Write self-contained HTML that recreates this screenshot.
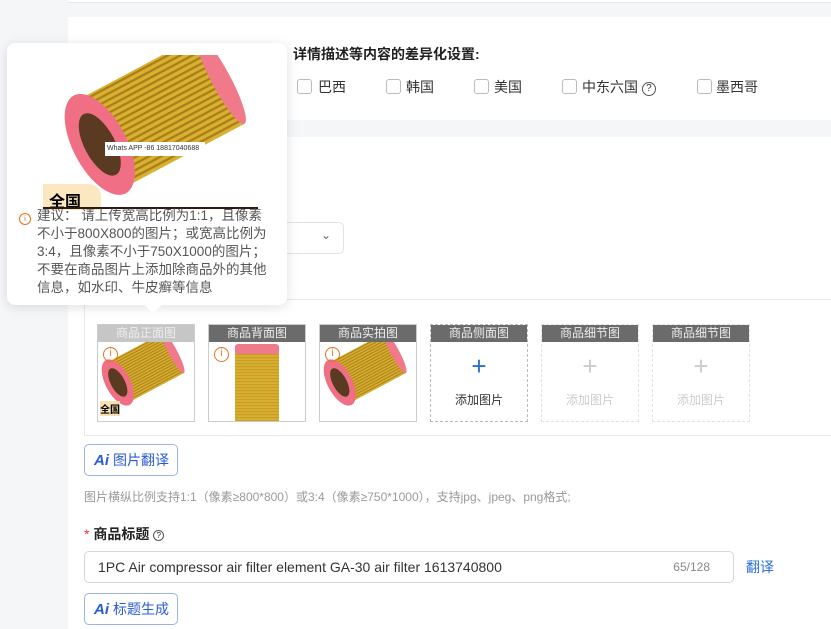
<!DOCTYPE html>
<html><head><meta charset="utf-8"><style>
*{margin:0;padding:0;box-sizing:border-box}
body{width:831px;height:629px;overflow:hidden;background:#f5f6f8;font-family:"Liberation Sans","Noto Sans CJK SC",sans-serif;position:relative;color:#333}
.abs{position:absolute}
.card{position:absolute;background:#fff}
.cb{position:absolute;top:79px;width:15px;height:15px;border:1px solid #bbb;border-radius:3px;background:#fff}
.cl{position:absolute;top:77px;font-size:14px;color:#333}
.tile{position:absolute;top:324px;width:98px;height:98px;border:1px solid #ccc;background:#fff;overflow:hidden}
.th{height:17px;background:#6b6b6b;color:#eee;font-size:12px;text-align:center;line-height:17px}
.dash{border:1px dashed #bbb}
.dash2{border:1px dashed #e2e2e2}
.plus{text-align:center;font-size:26px;line-height:26px;margin-top:11px}
.add{text-align:center;font-size:12px;margin-top:12px}
.btn{position:absolute;left:84px;width:94px;height:32px;border:1px solid #9db3e6;border-radius:5px;background:#fff;font-size:14px;color:#2a5bd7;line-height:30px;padding-left:9px}
.btn b{font-style:italic;font-weight:bold;font-size:15px;margin-right:4px}
.ic{position:absolute;left:5px;top:22px;width:15px;height:15px;border:1.5px solid #e8721c;border-radius:50%;color:#e8721c;font-size:10px;text-align:center;line-height:12px}
</style></head><body>
<div class="abs" style="left:68px;top:0;width:763px;height:3px;background:#fff;border-bottom:1px solid #e8e8e8"></div>
<div class="card" style="left:68px;top:17px;width:763px;height:103px"></div>
<div class="card" style="left:68px;top:137px;width:763px;height:492px"></div>
<div class="abs" style="left:293px;top:44px;font-size:14px;font-weight:bold;color:#222">详情描述等内容的差异化设置:</div>
<div class="cb" style="left:297px"></div><div class="cl" style="left:318px">巴西</div>
<div class="cb" style="left:386px"></div><div class="cl" style="left:406px">韩国</div>
<div class="cb" style="left:474px"></div><div class="cl" style="left:494px">美国</div>
<div class="cb" style="left:562px"></div><div class="cl" style="left:582px">中东六国 <span style="display:inline-block;width:14px;height:14px;border:1px solid #555;border-radius:50%;font-size:10px;text-align:center;line-height:12px;vertical-align:1px">?</span></div>
<div class="cb" style="left:697px"></div><div class="cl" style="left:716px">墨西哥</div>
<div class="abs" style="left:240px;top:222px;width:104px;height:32px;border:1px solid #e3e3e3;border-radius:5px"><span style="position:absolute;right:12px;top:5px;font-size:12px;color:#666">&#8964;</span></div>
<div class="abs" style="left:84px;top:299px;width:747px;height:137px;border:1px solid #e8e8e8;border-right:none"></div>

<svg width="0" height="0" style="position:absolute"><defs>
<pattern id="stripes" width="3" height="3" patternUnits="userSpaceOnUse"><rect width="3" height="1.2" fill="#a8801a"/></pattern>
<g id="f">
<g transform="rotate(-28 50 50)">
<rect x="30" y="14" width="72" height="52" fill="#d9b030"/>
<rect x="30" y="14" width="72" height="52" fill="url(#stripes)"/>
<ellipse cx="102" cy="40" rx="5" ry="26" fill="#f07a8a"/>
<ellipse cx="30" cy="40" rx="14" ry="29" fill="#f06f85"/>
<ellipse cx="30" cy="40" rx="8" ry="18" fill="#5a3a20"/>
</g></g>
</defs></svg>

<div class="tile" style="left:97px"><div class="th" style="background:#c6c6c6">商品正面图</div>
<svg width="96" height="80" viewBox="5 5 110 90"><use href="#f"/></svg>
<div class="abs" style="left:2px;top:76px;font-size:10px;font-weight:bold;color:#000;background:#f8e0b0">全国</div>
<div class="ic">i</div></div>
<div class="tile" style="left:208px"><div class="th">商品背面图</div>
<svg width="96" height="80" viewBox="0 0 96 80"><rect x="26" y="4" width="44" height="76" fill="#d9b030"/><rect x="26" y="4" width="44" height="76" fill="url(#stripes)" opacity=".4"/><rect x="26" y="2" width="44" height="10" rx="3" fill="#f07a8a"/></svg>
<div class="ic">i</div></div>
<div class="tile" style="left:319px"><div class="th">商品实拍图</div>
<svg width="96" height="80" viewBox="5 5 110 90"><use href="#f"/></svg>
<div class="ic">i</div></div>
<div class="tile dash" style="left:430px"><div class="th">商品侧面图</div><div class="plus" style="color:#2a6fd6">+</div><div class="add" style="color:#333">添加图片</div></div>
<div class="tile dash2" style="left:541px"><div class="th">商品细节图</div><div class="plus" style="color:#ccc">+</div><div class="add" style="color:#ccc">添加图片</div></div>
<div class="tile dash2" style="left:652px"><div class="th">商品细节图</div><div class="plus" style="color:#ccc">+</div><div class="add" style="color:#ccc">添加图片</div></div>

<div class="btn" style="top:444px"><b>Ai</b>图片翻译</div>
<div class="abs" style="left:84px;top:488px;font-size:12px;color:#999">图片横纵比例支持1:1（像素≥800*800）或3:4（像素≥750*1000），支持jpg、jpeg、png格式;</div>
<div class="abs" style="left:84px;top:524px;font-size:14px;font-weight:bold;color:#222"><span style="color:#e33;font-weight:normal">*</span> 商品标题 <span style="display:inline-block;width:11px;height:11px;border:1px solid #555;border-radius:50%;font-size:8px;text-align:center;line-height:9px;font-weight:normal;vertical-align:1px">?</span></div>
<div class="abs" style="left:84px;top:551px;width:650px;height:32px;border:1px solid #d6d6d6;border-radius:5px;font-size:14px;line-height:30px;padding-left:13px;color:#333">1PC Air compressor air filter element GA-30 air filter 1613740800<span style="position:absolute;right:23px;font-size:12px;color:#888">65/128</span></div>
<div class="abs" style="left:746px;top:557px;font-size:14px;color:#2a6fd6">翻译</div>
<div class="btn" style="top:593px"><b>Ai</b>标题生成</div>

<div class="abs" style="left:7px;top:43px;width:280px;height:262px;background:#fff;border-radius:8px;box-shadow:0 2px 12px rgba(0,0,0,.12)">
<svg class="abs" style="left:40px;top:12px" width="210" height="150" viewBox="0 0 110 78"><g transform="translate(0,-4)"><use href="#f"/></g></svg>
<div class="abs" style="left:98px;top:99px;width:100px;height:14px;background:#fff;font-size:7px;line-height:14px;padding-left:2px;color:#333">Whats APP -86 18817040688</div>
<div class="abs" style="left:36px;top:141px;width:58px;height:26px;background:#fbe8c0;border-radius:0 12px 0 0;font-size:16px;font-weight:bold;color:#000;padding:4px 0 0 6px">全国</div>
<div class="abs" style="left:36px;top:164px;width:215px;height:2px;background:#2a1a10"></div>
<div class="abs" style="left:12px;top:170px;width:12px;height:12px;border:1px solid #e8721c;border-radius:50%;color:#e8721c;font-size:8px;text-align:center;line-height:10px">i</div>
<div class="abs" style="left:30px;top:164px;width:232px;font-size:13.5px;line-height:18px;color:#555">建议： 请上传宽高比例为1:1，且像素不小于800X800的图片；或宽高比例为3:4，且像素不小于750X1000的图片；不要在商品图片上添加除商品外的其他信息，如水印、牛皮癣等信息</div>
<div class="abs" style="left:140px;top:256px;width:12px;height:12px;background:#fff;transform:rotate(45deg)"></div>
</div>
</body></html>
